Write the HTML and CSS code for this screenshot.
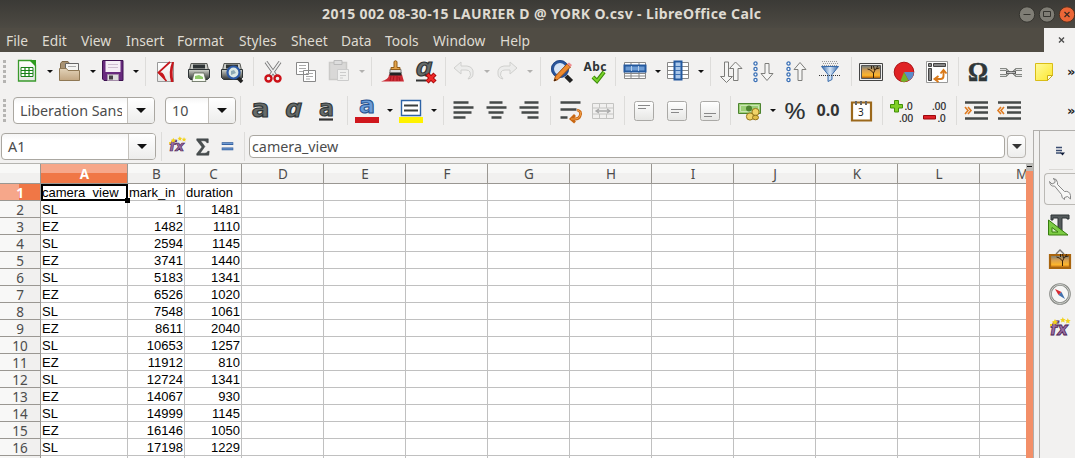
FILE: index.html
```html
<!DOCTYPE html>
<html lang="en">
<head>
<meta charset="utf-8">
<title>LibreOffice Calc</title>
<link rel="stylesheet" href="styles.css">
</head>
<body>
<svg class="defs" width="0" height="0">
  <defs>
    <linearGradient id="sheet" x1="0" y1="0" x2="0" y2="1"><stop offset="0" stop-color="#fff"/><stop offset="1" stop-color="#e6e6e4"/></linearGradient>
    <linearGradient id="folder" x1="0" y1="0" x2="0" y2="1"><stop offset="0" stop-color="#e2d2b8"/><stop offset="1" stop-color="#c2a681"/></linearGradient>
    <linearGradient id="printer" x1="0" y1="0" x2="0" y2="1"><stop offset="0" stop-color="#d3d7cf"/><stop offset=".45" stop-color="#888a85"/><stop offset="1" stop-color="#2e3436"/></linearGradient>
    <linearGradient id="sunset" x1="0" y1="0" x2="0" y2="1"><stop offset="0" stop-color="#6b7b80"/><stop offset=".4" stop-color="#d9a050"/><stop offset=".75" stop-color="#fdb62c"/><stop offset=".85" stop-color="#e08f1c"/><stop offset="1" stop-color="#8a4c0a"/></linearGradient>
    <linearGradient id="funnel" x1="0" y1="0" x2="1" y2="0"><stop offset="0" stop-color="#3465a4"/><stop offset=".5" stop-color="#d7e7f8"/><stop offset="1" stop-color="#3465a4"/></linearGradient>
    <linearGradient id="note" x1="0" y1="0" x2="1" y2="1"><stop offset="0" stop-color="#fffb9c"/><stop offset="1" stop-color="#fce62c"/></linearGradient>
    <g id="lens"><path d="M17 17 22.500 22.500" stroke="#222" stroke-width="4.500"/><circle cx="11" cy="10" r="7.500" fill="#d5e3f5" stroke="#2a559b" stroke-width="3"/><circle cx="11" cy="10" r="8.500" fill="none" stroke="#1e3f7c" stroke-width=".7"/></g>
    <g id="fx"><text x="3" y="19" font-family="DejaVu Sans" font-size="17" font-style="italic" font-weight="bold" fill="#9a6fa3" stroke="#4b2354" stroke-width=".8" textLength="18" lengthAdjust="spacingAndGlyphs">fx</text><path d="m7 5 1-2 1 2 2 .3-1.500 1.400.4 2L8 7.700l-2 1 .4-2L5 5.300zM15 3l.8-2 .9 2 2 .2-1.500 1.300.4 2-1.800-1-1.700 1 .4-2L13 3.200zM20 4l.8-2 .9 2 2 .2-1.500 1.300.4 2-1.800-1-1.700 1 .4-2L18 4.200zM3 8h2v2H3z" fill="#f2d21b"/></g>
    <path id="tree" d="M15.500 19v-5l-3-3-3-1m6 4 2-4 4-1m-5 2-1-4m-2 3v-3m5 3 1-3" fill="none" stroke="#34200a" stroke-width="1"/>
  </defs>
</svg>

<header class="titlebar">
  <h1>2015 002 08-30-15 LAURIER D @ YORK O.csv - LibreOffice Calc</h1>
  <div class="window-buttons">
    <svg width="16" height="17"><circle cx="8" cy="8.500" r="7.700" fill="#7f7d75" stroke="#35342f"/><path d="M4.500 8.500h7" stroke="#35342f"/></svg>
    <svg width="16" height="17"><circle cx="8" cy="8.500" r="7.700" fill="#7f7d75" stroke="#35342f"/><path d="M4.500 5.500h7v5h-7z" fill="none" stroke="#35342f"/></svg>
    <svg width="16" height="17"><circle cx="8" cy="8.500" r="7.700" fill="#eb6637" stroke="#53311f"/><path d="m5.500 6 5 5m0-5-5 5" stroke="#3a2a22" stroke-width="1.200"/></svg>
  </div>
</header>

<nav class="menubar">
  <div class="menus"><span>File</span><span>Edit</span><span>View</span><span>Insert</span><span>Format</span><span>Styles</span><span>Sheet</span><span>Data</span><span>Tools</span><span>Window</span><span>Help</span></div>
  <div class="close-doc"><svg width="8" height="8"><path d="m1 1.500 5 5m0-5-5 5" stroke="#4c4c4c" stroke-width="1.400"/></svg></div>
</nav>

<div class="toolbar standard">
  <i class="grip"></i>
  <div class="tool drop"><svg class="ico" viewBox="0 0 26 26"><path d="M4.500 2.500h13l4 4.500v16h-17z" fill="url(#sheet)" stroke="#3a9a2c" stroke-width="1.300"/><path d="M15 2h7v7z" fill="#2e9b1f"/><path d="M7 9.500h12v9H7z" fill="#fff" stroke="#188018"/><path d="M7 12.500h12m-12 3h12m-8-6v9m4-9v9" stroke="#188018" stroke-width="1.200"/></svg></div>
  <div class="tool drop"><svg class="ico" viewBox="0 0 26 26"><path d="M3.500 20V5.500L5 3.500h6l1.500 2H21v15z" fill="#a89272" stroke="#7d6849"/><path d="M8.500 5.500h13v9h-13z" fill="#f5f5f3" stroke="#666"/><path d="M11 8.500h8" stroke="#aaa"/><path d="M2.500 10.500h7l1.500 2h11.500v10h-20z" fill="url(#folder)" stroke="#8f7854"/></svg></div>
  <div class="tool drop"><svg class="ico" viewBox="0 0 26 26"><path d="M2.500 3q0-.5.500-.5h20v20H4l-1.500-1.500z" fill="#682a7e" stroke="#3d1150"/><path d="M5.500 3h15v11h-15z" fill="#f4edf5"/><path d="M8 6.500h10m-10 3h10" stroke="#cdbdd0"/><path d="M7.500 16.500h11v6h-11z" fill="#ddd" stroke="#a58eaa"/><path d="M9 17.500h4v4H9z" fill="#454045"/></svg></div>
  <i class="sep s10"></i>
  <div class="tool"><svg class="ico" viewBox="0 0 26 26"><path d="M4.500 3.500h16v19h-16z" fill="url(#sheet)" stroke="#999"/><path d="M17 3 5.500 13.500l8 8.500" fill="none" stroke="#c6161c" stroke-width="1.700"/><path d="M21 3h-2q-4 10-1 20h2.500q-2-10 .5-20zM5 14q6-3 8 8-3-4-8-8z" fill="#c6161c"/></svg></div>
  <div class="tool"><svg class="ico" viewBox="0 0 26 26"><path d="M5 4.500h16l2 9H3z" fill="#c9cbc6" stroke="#555753"/><path d="M7 5.500h12v4H7z" fill="#2e3436"/><path d="M2.500 10.500h21v8l-2 2h-17l-2-2z" fill="url(#printer)" stroke="#2e3436"/><path d="M8 14h10l2 8.500H6z" fill="#f7fbf2" stroke="#5a6454" stroke-width=".8"/><path d="M9 20v-3l4-1 4 2v2z" fill="#8fc96a"/></svg></div>
  <div class="tool"><svg class="ico" viewBox="0 0 26 26"><path d="M5 4.500h16l2 9H3z" fill="#c9cbc6" stroke="#555753"/><path d="M7 5.500h12v4H7z" fill="#2e3436"/><path d="M2.500 10.500h21v8l-2 2h-17l-2-2z" fill="url(#printer)" stroke="#2e3436"/><path d="m18 18 5 5" stroke="#222" stroke-width="3.500"/><circle cx="14.500" cy="13.500" r="6" fill="#dce8e4" stroke="#2c5aa7" stroke-width="2.200"/><path d="M12 16v-4l3-1 2 3z" fill="#8eaab5"/></svg></div>
  <i class="sep s8"></i>
  <div class="tool"><svg class="ico" viewBox="0 0 26 26"><path d="m6 3 10 14m4-14L10 17" stroke="#777" stroke-width="3.400"/><path d="m6 3 10 14m4-14L10 17" stroke="#eee" stroke-width="1.700"/><circle cx="8.500" cy="19.500" r="3" fill="none" stroke="#cc1118" stroke-width="2.400"/><circle cx="17.500" cy="19.500" r="3" fill="none" stroke="#cc1118" stroke-width="2.400"/></svg></div>
  <div class="tool"><svg class="ico" viewBox="0 0 26 26"><path d="M3.500 3.500h12v12h-12zM10.500 11.500h12v11h-12z" fill="#fff" stroke="#888"/><path d="M6 6.500h7m-7 3h7m-7 3h4m3 2h7m-7 3h7m-7 2.500h4" stroke="#aaa"/></svg></div>
  <div class="tool drop off"><svg class="ico" viewBox="0 0 26 26"><path d="M3.500 4.500h17v17h-17z" fill="#d9d8d7" stroke="#cbcac8" stroke-width="1.500"/><path d="M8 2.500h8v4H8z" fill="#ddd" stroke="#bbb"/><path d="M11.500 11.500h11v11h-11z" fill="#f0f0ef" stroke="#ccc"/><path d="M14 14.500h6m-6 3h6m-6 2.500h3" stroke="#ccc"/></svg></div>
  <i class="sep s11"></i>
  <div class="tool"><svg class="ico" viewBox="0 0 26 26"><path d="M1 22.500q8-2 8-7h13q1 4 2 7z" fill="#cb2b34"/><path d="m10 22 1-5m2 5 1-5m3 5v-5m3 5-1-4" stroke="#a10e1a" stroke-width=".8"/><path d="M9.500 13h12v3.500h-12z" fill="#222"/><path d="M10 10.500h11v3H10z" fill="#ddd" stroke="#777"/><path d="M11 10.500V8.500h3v-6q1.500-1.500 3 0v6h3v2z" fill="#e3a34a" stroke="#925c17"/></svg></div>
  <div class="tool"><svg class="ico" viewBox="0 0 26 26"><text class="letter single" x="2.500" y="17" font-size="25" textLength="17" lengthAdjust="spacingAndGlyphs">a</text><path d="M3 21.500h10" stroke="#333" stroke-width="2"/><path d="m14 15 8 8m0-8-8 8" stroke="#9e0000" stroke-width="4.500"/><path d="m14.500 15.500 7 7m0-7-7 7" stroke="#ef2929" stroke-width="2.600"/></svg></div>
  <i class="sep s5"></i>
  <div class="tool drop off"><svg class="ico" viewBox="0 0 26 26"><path d="m3 10 7-6v4h6q7 1 6 8 0 4-5 5 4-4 2-7-1-2-4-2h-5v4z" fill="#ececeb" stroke="#d0d0ce"/></svg></div>
  <div class="tool drop off d44"><svg class="ico" viewBox="0 0 26 26"><path d="m23 10-7-6v4h-6q-7 1-6 8 0 4 5 5-4-4-2-7 1-2 4-2h5v4z" fill="#ececeb" stroke="#d0d0ce"/></svg></div>
  <i class="sep s11"></i>
  <div class="tool"><svg class="ico" viewBox="0 0 26 26"><use href="#lens"/><path d="m5 22 1.500-5L18 5l3.500 3L9 20.500z" fill="#ef8b2f" stroke="#9d4c0d"/><path d="m18 5 2-1.500 3 2.500-1.500 2z" fill="#ef8d91"/><path d="m5 22 1-2 1.500 1z"/></svg></div>
  <div class="tool"><svg class="ico" viewBox="0 0 26 26"><text x="1.500" y="12" font-family="Noto Sans" font-size="12" font-weight="bold" fill="#2e3436" textLength="23">Abc</text><path d="m11 18 4 4 7-9" fill="none" stroke="#3c8a0a" stroke-width="4"/><path d="m11 18 4 4 7-9" fill="none" stroke="#79d32c" stroke-width="2"/></svg></div>
  <i class="sep s7"></i>
  <div class="tool drop"><svg class="ico" viewBox="0 0 26 26"><path d="M2.500 4.500h21v16h-21z" fill="#fff" stroke="#888"/><path d="M2 15.500h22m-22 2.500h22m-15-13v16m8-16v16" stroke="#888"/><path d="M2.500 7.500h21v6h-21z" fill="#6c9bd3" stroke="#24599e" stroke-width="2"/><path d="M9.500 8v5m7-5v5" stroke="#b4cdea"/></svg></div>
  <div class="tool drop"><svg class="ico" viewBox="0 0 26 26"><path d="M2.500 4.500h21v16h-21z" fill="#fff" stroke="#888"/><path d="M2 8.500h22m-22 4h22m-22 4h22" stroke="#888"/><path d="M9.500 3.500h7v18h-7z" fill="#a9c7ea" stroke="#24599e" stroke-width="2"/><path d="M10 8.500h6m-6 4h6m-6 4h6" stroke="#3a6eb0"/></svg></div>
  <i class="sep s10"></i>
  <div class="tool"><svg class="ico" viewBox="0 0 26 26"><path d="M6.500 3v14.500h-4l6 6 6-6h-4V3zM15.500 21.500V9.500h-4l6-6.500 6.500 6.500h-4v12z" fill="#f5f5f4" stroke="#7d7d7a"/></svg></div>
  <div class="tool"><svg class="ico" viewBox="0 0 26 26"><g fill="#fff" stroke="#3b70b5" stroke-width="1.300"><circle cx="4.500" cy="4.500" r="1.600"/><circle cx="4.500" cy="10" r="1.600"/><circle cx="4.500" cy="15.500" r="1.600"/><circle cx="4.500" cy="21" r="1.600"/></g><path d="M14 4.500v10h-4l6 7 6-7h-4v-10z" fill="#f5f5f4" stroke="#7d7d7a"/></svg></div>
  <div class="tool"><svg class="ico" viewBox="0 0 26 26"><g fill="#fff" stroke="#3b70b5" stroke-width="1.300"><circle cx="4.500" cy="4.500" r="1.600"/><circle cx="4.500" cy="10" r="1.600"/><circle cx="4.500" cy="15.500" r="1.600"/><circle cx="4.500" cy="21" r="1.600"/></g><path d="M14 21.500v-11h-4l6-7 6 7h-4v11z" fill="#f5f5f4" stroke="#7d7d7a"/></svg></div>
  <div class="tool"><svg class="ico" viewBox="0 0 26 26"><path d="M5 2.500h16M6 4.500h16M5 6.500h16" stroke="#999" stroke-dasharray="1 1"/><path d="M4.500 7.500h17l-6.500 8v5l-4 2v-7z" fill="url(#funnel)" stroke="#3b6dac"/><path d="M2 16.500h22" stroke="#333" stroke-dasharray="1 1"/></svg></div>
  <i class="sep s8"></i>
  <div class="tool"><svg class="ico" viewBox="0 0 26 26"><path d="M1.500 4.500h23v17h-23z" fill="#eee" stroke="#444"/><path d="M3.500 6.500h19v13h-19z" fill="url(#sunset)" stroke="#555"/><use href="#tree"/></svg></div>
  <div class="tool"><svg class="ico" viewBox="0 0 26 26"><circle cx="13" cy="13" r="9.800" fill="#e02225" stroke="#ae1013"/><path d="M13 13h9.800q0 6-5 8.500z" fill="#5b8cca"/><path d="m13 13 4.500 8.500q-4 2.500-8 .5z" fill="#73b32b"/></svg></div>
  <div class="tool"><svg class="ico" viewBox="0 0 26 26"><path d="M2.500 2.500h21v21h-21z" fill="#fff" stroke="#999"/><path d="M4.500 4.500h3v3h-3zm5 0h12v3h-12zm-5 5h3v12h-3z" fill="#888" stroke="#444"/><path d="M19.500 12v5q0 3-3 3H12m4.500-5.500 3-3.500 3 3.500m-8 2.500-4 3 4 3" fill="none" stroke="#d97919" stroke-width="1.900"/></svg></div>
  <i class="sep s8"></i>
  <div class="tool"><svg class="ico" viewBox="0 0 26 26"><text x="3" y="22" font-family="Liberation Serif" font-size="27" font-weight="bold" fill="#2f3638" stroke="#2f3638" stroke-width=".6" textLength="20" lengthAdjust="spacingAndGlyphs">Ω</text></svg></div>
  <div class="tool"><svg class="ico" viewBox="0 0 26 26"><path d="M2 10.500h6l3 3-3 3H2m22-6h-6l-3 3 3 3h6" fill="none" stroke="#626560" stroke-width="2.400"/><path d="M2 10.500h6l3 3-3 3H2m22-6h-6l-3 3 3 3h6" fill="none" stroke="#eee" stroke-width=".9"/><path d="M8 13.500h10" stroke="#555" stroke-width="2.600"/><path d="M9 13.500h8" stroke="#ddd" stroke-width=".8"/></svg></div>
  <div class="tool"><svg class="ico" viewBox="0 0 26 26"><path d="M4.500 4.500h17v12l-5 5h-12z" fill="url(#note)" stroke="#d9bd16"/><path d="M16.500 21.500v-5h5z" fill="#fffde0" stroke="#c9ae17"/></svg></div>
  <span class="more">»</span>
</div>

<div class="toolbar formatting">
  <i class="grip"></i>
  <div class="combo font-name"><span>Liberation Sans</span><b></b></div>
  <div class="combo font-size"><span>10</span><b></b></div>
  <i class="sep s8"></i>
  <div class="tool"><svg class="ico" viewBox="0 0 26 26"><text class="letter" x="4.500" y="19" font-size="24" font-weight="bold" textLength="18" lengthAdjust="spacingAndGlyphs">a</text></svg></div>
  <div class="tool"><svg class="ico" viewBox="0 0 26 26"><text class="letter single" x="5" y="19" font-size="25" textLength="17" lengthAdjust="spacingAndGlyphs">a</text></svg></div>
  <div class="tool"><svg class="ico" viewBox="0 0 26 26"><text class="letter" x="6" y="18" font-size="23" font-weight="bold" textLength="15" lengthAdjust="spacingAndGlyphs">a</text><path d="M6 21.500h14" stroke="#333" stroke-width="2.200"/></svg></div>
  <i class="sep s8"></i>
  <div class="tool drop d44"><svg class="ico" viewBox="0 0 26 26"><text x="5" y="15" font-family="DejaVu Sans" font-size="23" font-weight="bold" fill="#6a9cd8" stroke="#234f8d" textLength="16" lengthAdjust="spacingAndGlyphs">a</text><path d="M1 19h24v6H1z" fill="#d0171d"/></svg></div>
  <div class="tool drop d44"><svg class="ico" viewBox="0 0 26 26"><path d="M3.500 2.500h19v15h-19z" fill="#fff" stroke="#2d63a6" stroke-width="1.400"/><path d="M6 7.500h14m-14 5h14" stroke="#3a3e3d" stroke-width="2.200"/><path d="M1 19h24v6H1z" fill="#fff200"/></svg></div>
  <i class="sep s8"></i>
  <div class="tool"><svg class="ico" viewBox="0 0 26 26"><path d="M3.500 4.500h15m-15 5h20m-20 5h18m-18 5h12" class="bars"/></svg></div>
  <div class="tool"><svg class="ico" viewBox="0 0 26 26"><path d="M6.500 4.500h13m-16 5h20m-18 5h15m-12 5h10" class="bars"/></svg></div>
  <div class="tool"><svg class="ico" viewBox="0 0 26 26"><path d="M8.500 4.500h14m-19 5h19m-17 5h17m-11 5h11" class="bars"/></svg></div>
  <i class="sep s8"></i>
  <div class="tool"><svg class="ico" viewBox="0 0 26 26"><path d="M3.500 4.500h20m-20 7h16m-16 8h7" class="bars"/><path d="M20 12q5 1 3 6-1 3-5 3h-4m4-4-4 4 4 3.500" fill="none" stroke="#c96712" stroke-width="2.800"/><path d="M20 12q5 1 3 6-1 3-5 3h-4" fill="none" stroke="#f5a34a"/></svg></div>
  <div class="tool"><svg class="ico" viewBox="0 0 26 26"><path d="M2.500 5.500h21v15h-21zM2 10h22m-22 6h22M9.500 5v5m7-5v5m-7 6v5m7-5v5" fill="#f1f0ef" stroke="#c4c4c2"/><path d="M6 13h14m-11-2-3 2 3 2m8-4 3 2-3 2" fill="none" stroke="#aaa" stroke-width="1.300"/></svg></div>
  <i class="sep s8"></i>
  <div class="tool"><svg class="ico" viewBox="0 0 26 26"><rect x="3.500" y="3.500" width="19" height="19" rx="2" class="page"/><path d="M7 7.500h12m-12 3h8" stroke="#888"/></svg></div>
  <div class="tool"><svg class="ico" viewBox="0 0 26 26"><rect x="3.500" y="3.500" width="19" height="19" rx="2" class="page"/><path d="M7 11.500h12m-12 3h8" stroke="#888"/></svg></div>
  <div class="tool"><svg class="ico" viewBox="0 0 26 26"><rect x="3.500" y="3.500" width="19" height="19" rx="2" class="page"/><path d="M7 15.500h12m-12 3h8" stroke="#888"/></svg></div>
  <i class="sep s7"></i>
  <div class="tool drop d45"><svg class="ico" viewBox="0 0 26 26"><path d="M1.500 5.500h22v10h-22z" fill="#9ccf76" stroke="#4d8430"/><path d="M3.500 7.500h18v6h-18z" fill="none" stroke="#d5ebc4" stroke-width=".8"/><circle cx="12" cy="10.500" r="3" fill="#4d8430"/><circle cx="18.500" cy="14" r="3.600" fill="#f0d368" stroke="#94761b"/><circle cx="13" cy="18.500" r="3.600" fill="#f0d368" stroke="#94761b"/><ellipse cx="18.500" cy="19.500" rx="3" ry="2.300" fill="#dfbc46" stroke="#94761b"/></svg></div>
  <div class="tool"><svg class="ico" viewBox="0 0 26 26"><text x="2" y="21" font-family="Noto Sans" font-size="22" fill="#2e3436" textLength="22" lengthAdjust="spacingAndGlyphs">%</text></svg></div>
  <div class="tool"><svg class="ico" viewBox="0 0 26 26"><text x="1.500" y="18" font-family="Noto Sans" font-size="16" font-weight="bold" fill="#333" textLength="23" lengthAdjust="spacingAndGlyphs">0.0</text></svg></div>
  <div class="tool"><svg class="ico" viewBox="0 0 26 26"><path d="M4 4.500h19v18H4z" fill="#fff" stroke="#9b681b" stroke-width="2.200"/><path d="M8 7V3m5 4V3m5 4V3" stroke="#666" stroke-width="2"/><text x="10" y="18" font-family="Noto Sans" font-size="10" fill="#222">3</text></svg></div>
  <i class="sep s8"></i>
  <div class="tool"><svg class="ico" viewBox="0 0 26 26"><path d="M1.500 6.500h4v-4h4v4h4v3.500h-4v4h-4v-4h-4z" fill="#80cf27" stroke="#439008"/><text class="decimal" x="15.500" y="12" textLength="8">.0</text><text class="decimal" x="10" y="23.500" textLength="14">.00</text></svg></div>
  <div class="tool"><svg class="ico" viewBox="0 0 26 26"><text class="decimal" x="10" y="12" textLength="14">.00</text><path d="M1.500 17.500h12v3.500h-12z" fill="#df2027" stroke="#9c080c"/><text class="decimal" x="15.500" y="23.500" textLength="8">.0</text></svg></div>
  <i class="sep s8"></i>
  <div class="tool"><svg class="ico" viewBox="0 0 26 26"><path d="M2 4.500h23m-14 5h14m-14 5h14m-23 6h23" class="bars"/><path d="m2 9 3 3.500L2 16m3-7 3 3.500L5 16" fill="none" stroke="#df7b21" stroke-width="1.600"/></svg></div>
  <div class="tool"><svg class="ico" viewBox="0 0 26 26"><path d="M2 4.500h23m-14 5h14m-14 5h14m-23 6h23" class="bars"/><path d="m5 9-3 3.500L5 16m3-7-3 3.500L8 16" fill="none" stroke="#df7b21" stroke-width="1.600"/></svg></div>
  <span class="more">»</span>
</div>

<main class="workspace">
  <section class="document">
    <div class="formula-bar">
      <div class="combo name-box"><span>A1</span><b></b></div>
      <i class="sep s8"></i>
      <svg class="fbtn" viewBox="-2 -1 30 30"><use href="#fx"/></svg>
      <svg class="fbtn" viewBox="0 0 26 26"><path d="M7 4.500h12v4h-1.500q-.5-2-3-2h-3.500l4.500 6-5 7h5q2.500 0 3-2H20l-.5 4H7v-1.500l5.500-7L7 6z" fill="#4a4f50" stroke="#2e3436" stroke-width=".5"/></svg>
      <svg class="fbtn" viewBox="0 0 26 26"><path d="M7 9.500h12M7 15h12" stroke="#2d5b9b" stroke-width="3"/><path d="M7.500 9.500h11m-11 5.500h11" stroke="#7ba6dc"/></svg>
      <i class="sep s8"></i>
      <div class="input-line">camera_view</div>
      <div class="expand"><i></i></div>
    </div>
    <div class="sheet-wrap">
      <div class="sheet">
        <div class="row head"><b></b><b class="on">A</b><b>B</b><b>C</b><b>D</b><b>E</b><b>F</b><b>G</b><b>H</b><b>I</b><b>J</b><b>K</b><b>L</b><b class="last">M</b></div>
        <div class="row"><b class="on">1</b><span class="cursor">camera_view</span><span>mark_in</span><span>duration</span><i></i></div>
        <div class="row"><b>2</b><span>SL</span><span class="n">1</span><span class="n">1481</span><i></i></div>
        <div class="row"><b>3</b><span>EZ</span><span class="n">1482</span><span class="n">1110</span><i></i></div>
        <div class="row"><b>4</b><span>SL</span><span class="n">2594</span><span class="n">1145</span><i></i></div>
        <div class="row"><b>5</b><span>EZ</span><span class="n">3741</span><span class="n">1440</span><i></i></div>
        <div class="row"><b>6</b><span>SL</span><span class="n">5183</span><span class="n">1341</span><i></i></div>
        <div class="row"><b>7</b><span>EZ</span><span class="n">6526</span><span class="n">1020</span><i></i></div>
        <div class="row"><b>8</b><span>SL</span><span class="n">7548</span><span class="n">1061</span><i></i></div>
        <div class="row"><b>9</b><span>EZ</span><span class="n">8611</span><span class="n">2040</span><i></i></div>
        <div class="row"><b>10</b><span>SL</span><span class="n">10653</span><span class="n">1257</span><i></i></div>
        <div class="row"><b>11</b><span>EZ</span><span class="n">11912</span><span class="n">810</span><i></i></div>
        <div class="row"><b>12</b><span>SL</span><span class="n">12724</span><span class="n">1341</span><i></i></div>
        <div class="row"><b>13</b><span>EZ</span><span class="n">14067</span><span class="n">930</span><i></i></div>
        <div class="row"><b>14</b><span>SL</span><span class="n">14999</span><span class="n">1145</span><i></i></div>
        <div class="row"><b>15</b><span>EZ</span><span class="n">16146</span><span class="n">1050</span><i></i></div>
        <div class="row"><b>16</b><span>SL</span><span class="n">17198</span><span class="n">1229</span><i></i></div>
        <div class="row"><b></b><span></span><span></span><span></span><i></i></div>
      </div>
      <div class="scrollbar"><i></i></div>
    </div>
  </section>
  <div class="splitter"></div>
  <aside class="sidebar">
    <svg class="side-menu" width="12" height="12"><path d="M1 2.500h6M1 5.500h6M1 8h5" stroke="#3b4d70" stroke-width="1.300"/><path d="M5 7.500h5l-2.500 3z" fill="#101c3a"/></svg>
    <hr>
    <div class="tab active"><svg class="ico" viewBox="0 0 26 26"><path d="M6 2.500q4 0 4.500 4v2l7 7q5-1 6 4v3.500l-3-2.500-3 1v2q-3-1-3-5L7.500 10q-4 1-5-4.500L5 8l3-1.500V4z" fill="#f7f7f6" stroke="#888"/></svg></div>
    <div class="tab"><svg class="ico" viewBox="0 0 26 26"><path d="M4 3h18v4h-2V6h-5v15h-4V6H6v2H4z" fill="#555b5c" stroke="#2e3436"/><path d="M1.500 8v15H21z" fill="#7ccc44" stroke="#367c0c"/><path d="M5 15.500v4.500h6z" fill="#d5f0c0" stroke="#367c0c"/></svg></div>
    <div class="tab"><svg class="ico" viewBox="0 0 26 26"><path d="m9 7 4-4 4 4" fill="none" stroke="#777" stroke-width="1.400"/><path d="M3 8h20v13H3z" fill="url(#sunset)" stroke="#a9650f" stroke-width="2.200"/><use href="#tree"/></svg></div>
    <div class="tab"><svg class="ico" viewBox="0 0 26 26"><circle cx="13" cy="13" r="9.500" fill="#f6f6f5" stroke="#858783" stroke-width="2.600"/><circle cx="13" cy="13" r="9.500" fill="none" stroke="#d2d4d0"/><path d="m8 8 6.500 3-3 3z" fill="#d82a31"/><path d="m18 18-6.500-4 3-3z" fill="#4271ad"/></svg></div>
    <div class="tab"><svg class="ico" viewBox="0 0 26 26"><use href="#fx"/></svg></div>
  </aside>
</main>
</body>
</html>
```

FILE: styles.css
```css
* { box-sizing: border-box; }
body { margin: 0; width: 1075px; height: 458px; overflow: hidden; background: #f2f1f0; font-family: "Noto Sans", sans-serif; color: #4c4c4c; }
.defs { display: block; height: 0; }
svg { display: block; flex: none; overflow: visible; }

.titlebar { display: flex; justify-content: flex-end; align-items: center; height: 28px; background: linear-gradient(#3b3a36, #4d4a43); }
.titlebar h1 { flex: none; width: 440px; margin: 0 257px 0 0; font-size: 14px; line-height: 28px; color: #dfdbd2; letter-spacing: .38px; white-space: nowrap; }
.window-buttons { display: flex; gap: 4px; }

.menubar { display: flex; justify-content: space-between; height: 24px; background: #504c44; }
.menus { display: grid; grid-template-columns: 36px 39px 45px 51px 62px 52px 50px 44px 48px 67px 40px; padding-left: 6px; font-size: 13.8px; line-height: 25px; color: #dfdbd2; }
.close-doc { display: flex; align-items: center; justify-content: center; width: 31px; padding-left: 5px; background: #f2f1f0; }

.toolbar { display: flex; align-items: center; height: 39px; overflow: hidden; }
.grip { flex: none; width: 3px; height: 24px; margin-left: 3px; background: repeating-linear-gradient(#b5b4b2 0 3px, transparent 3px 5px); }
.standard .grip { margin-right: 5px; }
.formatting .grip { margin-right: 7px; }
.tool { display: flex; flex: none; align-items: center; width: 33px; padding-left: 3px; }
.ico { width: 26px; height: 26px; }
.tool.drop { width: 43px; }
.tool.d44 { width: 44px; }
.tool.d45 { width: 45px; }
.tool.drop::after { content: ""; margin-left: 7px; border: solid transparent; border-width: 3px 3px 0; border-top-color: #111; }
.tool.off::after { border-top-color: #b2b1af; }
.standard .tool.drop { padding-bottom: 1px; }
.sep { flex: none; height: 29px; background: linear-gradient(#dddcda, #dddcda) center / 1px 100% no-repeat; }
.s5 { width: 5px; } .s7 { width: 7px; } .s8 { width: 8px; } .s10 { width: 10px; } .s11 { width: 11px; }
.more { margin-left: auto; flex: none; width: 8px; font: bold 13px "DejaVu Sans", sans-serif; color: #222; }
.letter { font-family: "DejaVu Sans", sans-serif; fill: #666b69; stroke: #2e3436; stroke-width: 1.1; }
.letter.single { font-family: "Open Sans", sans-serif; font-style: italic; font-weight: bold; }
.decimal { font-family: "Liberation Sans", sans-serif; font-size: 10px; fill: #222; stroke: #222; stroke-width: .2; }
.bars { stroke: #454948; stroke-width: 2.3; }
.page { fill: url(#sheet); stroke: #aaa9a6; }

.combo { display: flex; flex: none; height: 27px; border: 1px solid #aaa7a1; border-radius: 4px; background: linear-gradient(#f6f6f6, #fff 6px); font-size: 14.3px; line-height: 25px; overflow: hidden; }
.combo span { flex: 1; min-width: 0; overflow: hidden; white-space: nowrap; padding-left: 6px; }
.combo b { display: flex; flex: none; width: 27px; align-items: center; justify-content: center; border-left: 1px solid #c5c2bd; background: linear-gradient(#fff, #ededec); }
.combo b::after { content: ""; border: solid transparent; border-width: 5px 5px 0; border-top-color: #111; }
.font-name { width: 142px; margin-right: 10px; }
.font-name span { margin-right: 5px; }
.font-size { width: 71px; }

.workspace { display: flex; height: 328px; }
.document { width: 1033px; flex: none; }
.formula-bar { display: flex; align-items: center; height: 33px; padding-left: 1px; }
.name-box { width: 155px; height: 27px; margin-right: 1px; }
.fbtn { width: 25px; height: 26px; }
.input-line { flex: 1; height: 23px; margin-left: 1px; padding-left: 2px; border: 1px solid #aaa7a1; border-radius: 4px; background: #fff; font-size: 14.3px; line-height: 22px; }
.expand { display: flex; align-items: center; justify-content: center; width: 19px; height: 23px; margin: 0 7px 0 2px; border: 1px solid #b8b5b0; border-radius: 4px; background: linear-gradient(#fff, #ededec); }
.expand i { border: solid transparent; border-width: 5px 5px 0; border-top-color: #333; }

.sheet-wrap { display: flex; height: 295px; border-top: 1px solid #b5b4b0; }
.sheet { width: 1026px; overflow: hidden; background: #fff; }
.row { display: grid; grid-template-columns: 41px 87px 57px 57px 1fr; height: 17px; font: 13px/17px "Liberation Sans", Arial, sans-serif; color: #000; }
.row > * { border: solid #c0c0c0; border-width: 0 1px 1px 0; white-space: nowrap; overflow: hidden; }
.row span { padding: 0 0 0 1px; }
.row .n { padding: 0 1px 0 0; text-align: right; }
.row i { border-right: 0; background: repeating-linear-gradient(90deg, transparent 0 81px, #c0c0c0 81px 82px); }
.row b { font: 13.5px/18px "Noto Sans", sans-serif; text-align: center; color: #4c4c4c; border-color: #9a9792; background: linear-gradient(90deg, #f8f8f7 0 50%, #f1f0ef 50%); }
.row.head { grid-template-columns: 41px 87px 57px 57px repeat(9, 82px) 46px; height: 20px; }
.row.head b { padding-left: 1px; line-height: 20px; font-size: 13.5px; background: linear-gradient(#f8f8f7 0 45%, #f1f0ef 45%); }
.row.head .last { text-indent: 35px; text-align: left; border-right: 0; }
.row b.on { color: #fff; font-weight: bold; background: linear-gradient(90deg, #f6a78a 0 47%, #f07746 47%); }
.row.head b.on { background: linear-gradient(#f6a78a 0 45%, #f07746 45%); }
.row .cursor { position: relative; padding-left: 0; border: 2px solid #000; line-height: 13px; text-indent: -1px; overflow: visible; }
.row .cursor::after { content: ""; position: absolute; right: -4px; bottom: -4px; width: 5px; height: 5px; background: #000; }
.scrollbar { width: 7px; padding-top: 7px; background: #f38f68 linear-gradient(#bdbcb9, #bdbcb9) top / 100% 7px no-repeat; }
.scrollbar i { display: block; width: 5px; height: 1px; margin: -5px 0 0 1px; background: #111; }
.splitter { width: 7px; border: solid #b0aeab; border-width: 1px 1px 0 1px; background: #f2f1f0; }
.sidebar { display: flex; flex: 1; flex-direction: column; border-top: 1px solid #b0aeab; padding-left: 4px; }
.side-menu { margin: 14px 0 0 11px; }
.sidebar hr { width: 24px; margin: 12px 0 3px 5px; border: 0; border-top: 1px solid #dad8d5; }
.tab { display: flex; align-items: center; height: 34.6px; padding-left: 3px; }
.tab.active { height: 32px; margin-bottom: 3px; border: 1px solid #bbb9b5; border-right: 0; border-radius: 4px 0 0 4px; padding-left: 2px; }
```
